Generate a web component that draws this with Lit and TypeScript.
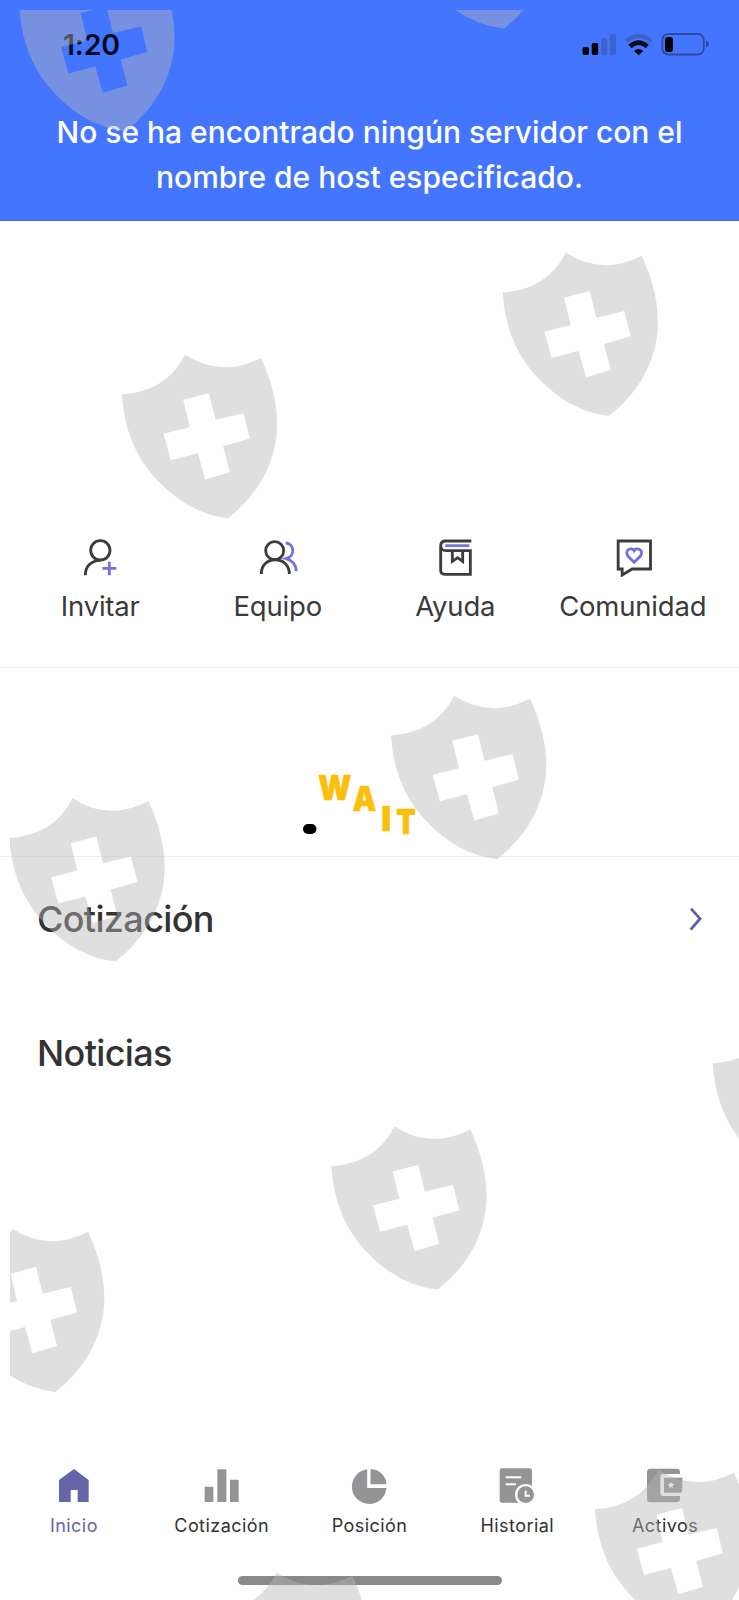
import { LitElement, html, svg, css } from "lit";
import { customElement } from "lit/decorators.js";

const actions = [
  { label: "Invitar", cls: "invite", box: "120 50 120 120", art: svg`
    <circle cx="181" cy="90" r="29"/><path d="M136 165C136 139 153 120 181 120"/>
    <path class="accent" d="M208 124V165M187 144H229"/>` },
  { label: "Equipo", cls: "team", box: "652 50 120 120", art: svg`
    <circle cx="702" cy="91" r="27"/><path d="M662 161C661 104 746 104 746 161"/>
    <path class="accent" d="M735 68C763 70 764 108 736 115C757 121 767 135 767 153"/>` },
  { label: "Ayuda", cls: "help", box: "106 50 120 120", art: svg`
    <path d="M215 62H138Q124 62 123 76V150Q123 162 136 162H212V91H139Q124 91 123 77M158 92V123L174 112L189 123V92"/>
    <path class="accent" d="M137 76H209"/>` },
  { label: "Comunidad", cls: "community", box: "637.5 50 120 120", art: svg`
    <path d="M653 62H750V146H695L665 164V146H653Z"/>
    <path class="accent" d="M701 126L682 107C670 87 694 80 701 91C708 80 732 87 720 107Z"/>` },
];

const tabs = [
  { label: "Inicio", cls: "on", box: "162 48 120 120", art: svg`<path d="M222 57L266 90V156H233V120H212V156H177V90Z"/>` },
  { label: "Cotización", cls: "quote", box: "605 48 120 120", art: svg`<path d="M613 110h26v46h-26zM651 58h27v98h-27zM689 89h26v67h-26z"/>` },
  { label: "Posición", cls: "position", box: "-58.5 48 120 120", art: svg`
    <path d="M-4 58A52 52 0 1 0 54 114H-4Z"/><path d="M6 57A50 47 0 0 1 54 103H6Z"/>` },
  { label: "Historial", cls: "history", box: "385 48 120 120", art: svg`
    <rect x="393" y="55" width="97" height="103" rx="7"/><path class="line" d="M411 82H458M411 103H442"/>
    <circle class="white" cx="471" cy="134" r="32"/><circle cx="471" cy="134" r="25"/><path class="line" d="M471 122V137H484"/>` },
  { label: "Activos", cls: "assets", box: "828 48 120 120", art: svg`
    <rect x="834" y="56" width="99" height="101" rx="10"/><path class="white" d="M940 72H882Q874 72 874 80V130Q874 138 882 138H940Z"/>
    <path d="M940 83H885V128H934Q940 128 940 122Z"/><path class="white" d="M906 95l3 6 7 1-5 5 1 7-6-3-6 3 1-7-5-5 7-1z"/>` },
];

const shields = [
  [-483.3, -284.6], [-105, -387.4], [0, 0], [-380.8, 102.2], [-111.7, 443.2],
  [-493.3, 545.6], [210, 771], [-171.4, 873.8], [-553.6, 976], [92.3, 1217], [-289.3, 1320],
];

@customElement("app-root")
export class AppRoot extends LitElement {
  static styles = css`
    :host { display: block; position: relative; width: 739px; height: 1600px; overflow: hidden;
      background: #fefefe; color: #333; font-family: Inter, "Liberation Sans", sans-serif; }
    * { box-sizing: border-box; }
    svg { display: block; }
    .screen { display: flex; flex-direction: column; height: 100%; }
    .banner { height: 221px; background: #4475ff; border-bottom: 1px solid #4368cf; }
    .status { height: 110px; padding: 27px 29px 0 63px; display: flex; justify-content: space-between; color: #030a1c; }
    .time { font-size: 28.5px; line-height: 35px; font-weight: 600; letter-spacing: -.2px; }
    .message { margin: 0; text-align: center; color: #fff; font-size: 30px; line-height: 44.5px; font-weight: 500; letter-spacing: 0; }
    .actions { display: grid; grid-template-columns: repeat(4, 177.5px); height: 447px; padding: 316px 0 0 11.5px; border-bottom: 1px solid #eee; }
    .action { display: flex; flex-direction: column; align-items: center; white-space: nowrap; font-size: 27.5px; line-height: 36px; gap: 11px; letter-spacing: -.2px; font-weight: 400; color: #3a3a3a; }
    .action svg { fill: none; stroke: #3c3c3e; stroke-width: 8.5; stroke-linecap: butt; }
    .action .accent { stroke: #7473d6; }
    .loading { height: 189px; border-bottom: 1px solid #eee; padding: 92px 0 0 290px; }
    .wait { font-size: 34px; font-weight: 900; fill: #fbbf0b; stroke: #fbbf0b; stroke-width: .6; stroke-linejoin: round; }
    .section { display: flex; justify-content: space-between; align-items: center; margin: 0; height: 48px; padding: 0 35px 0 37px; font-size: 36px; line-height: 48px; font-weight: 500; letter-spacing: -.65px; }
    .quote-row { margin-top: 38px; }
    .news-row { margin-top: 86px; }
    .tabs { margin-top: auto; height: 110px; display: grid; grid-template-columns: repeat(5, 1fr); }
    .tab { display: flex; flex-direction: column; align-items: center; gap: 8px; font-size: 18px; line-height: 24px; font-weight: 400; letter-spacing: .45px; }
    .tab svg { fill: #949496; }
    .tab .white { fill: #fefefe; }
    .tab .line { fill: none; stroke: #fefefe; stroke-width: 6; }
    .tab.on { color: #6665a8; }
    .tab.on svg { fill: #6665a8; }
    .foot { height: 24px; display: flex; justify-content: center; align-items: flex-start; }
    .handle { width: 264px; height: 9px; border-radius: 5px; background: #888a89; }
    .marks { position: absolute; inset: 0; pointer-events: none; }
  `;

  render() {
    return html`
      <div class="screen">
        <header class="banner">
          <div class="status">
            <span class="time">1:20</span>
            <svg width="130" height="34" viewBox="0 0 130 34">
              <g transform="translate(-580 -27)">
                <rect x="582.5" y="47" width="6.5" height="8" rx="2"/><rect x="591.7" y="43" width="6.5" height="12" rx="2"/>
                <g fill="#3c63cc"><rect x="601" y="38" width="6.3" height="17" rx="2"/><rect x="609.7" y="34" width="6.3" height="21" rx="2"/></g>
                <g fill="none" stroke-width="4.2"><path d="M626 41.5Q638.5 30.5 651.5 41.5" stroke="#3b62c8"/><path d="M630 46.5Q638.5 38.8 647.3 46.5" stroke="#030a1c" stroke-width="4.5"/></g>
                <path d="M634 51Q638.5 47 643.2 51L638.6 55.3Z"/>
                <rect x="662.3" y="34" width="41.5" height="20.5" rx="6" fill="none" stroke="#2c4b9e" stroke-width="1.8"/>
                <rect x="665" y="37" width="8" height="15" rx="3"/><path d="M706 40.5Q709 42 709 44Q709 46 706 47.5Z" fill="#2c4b9e"/>
              </g>
            </svg>
          </div>
          <p class="message">No se ha encontrado ningún servidor con el<br>nombre de host especificado.</p>
        </header>
        <nav class="actions">
          ${actions.map((a) => html`<div class="action ${a.cls}">
            <svg width="40" height="40" viewBox=${a.box}>${a.art}</svg><span>${a.label}</span></div>`)}
        </nav>
        <section class="loading">
          <svg width="140" height="90" viewBox="290 760 140 90">
            <g class="wait">
              <text x="318" y="800" textLength="33.5" lengthAdjust="spacingAndGlyphs">W</text>
              <text x="352.5" y="811.3" textLength="24" lengthAdjust="spacingAndGlyphs">A</text>
              <text x="381.3" y="830.5">I</text>
              <text x="396.3" y="833.7" textLength="19.5" lengthAdjust="spacingAndGlyphs">T</text>
            </g>
            <rect x="303" y="824" width="13.5" height="10" rx="5"/>
          </svg>
        </section>
        <h2 class="section quote-row"><span class="t1">Cotización</span>
          <svg width="16" height="26" viewBox="146 79 48 78"><path d="M155 87L182 117L154 150" fill="none" stroke="#5f60a3" stroke-width="8.5"/></svg>
        </h2>
        <h2 class="section news-row"><span class="t2">Noticias</span></h2>
        <nav class="tabs">
          ${tabs.map((t) => html`<div class="tab ${t.cls}">
            <svg width="40" height="40" viewBox=${t.box}>${t.art}</svg><span>${t.label}</span></div>`)}
        </nav>
        <div class="foot"><div class="handle"></div></div>
      </div>
      <svg class="marks" width="739" height="1600" viewBox="0 0 739 1600">
        <clipPath id="area"><rect x="10" y="10" width="729" height="1590"/></clipPath>
        <g clip-path="url(#area)" fill="#b8b8b8" fill-opacity=".43" fill-rule="evenodd">
          ${shields.map(([x, y]) => svg`<path transform="translate(${490 + x} ${240 + y}) scale(.33333)"
            d="M38 157Q170 150 228 38Q335 108 455 47Q515 175 501 290Q480 430 357 528Q240 515 145 415Q48 315 38 157ZM222 173L299 153L319 233L403 213L422 289L342 312L362 390L288 412L266 333L185 354L163 275L242 255Z"/>`)}
        </g>
      </svg>`;
  }
}
